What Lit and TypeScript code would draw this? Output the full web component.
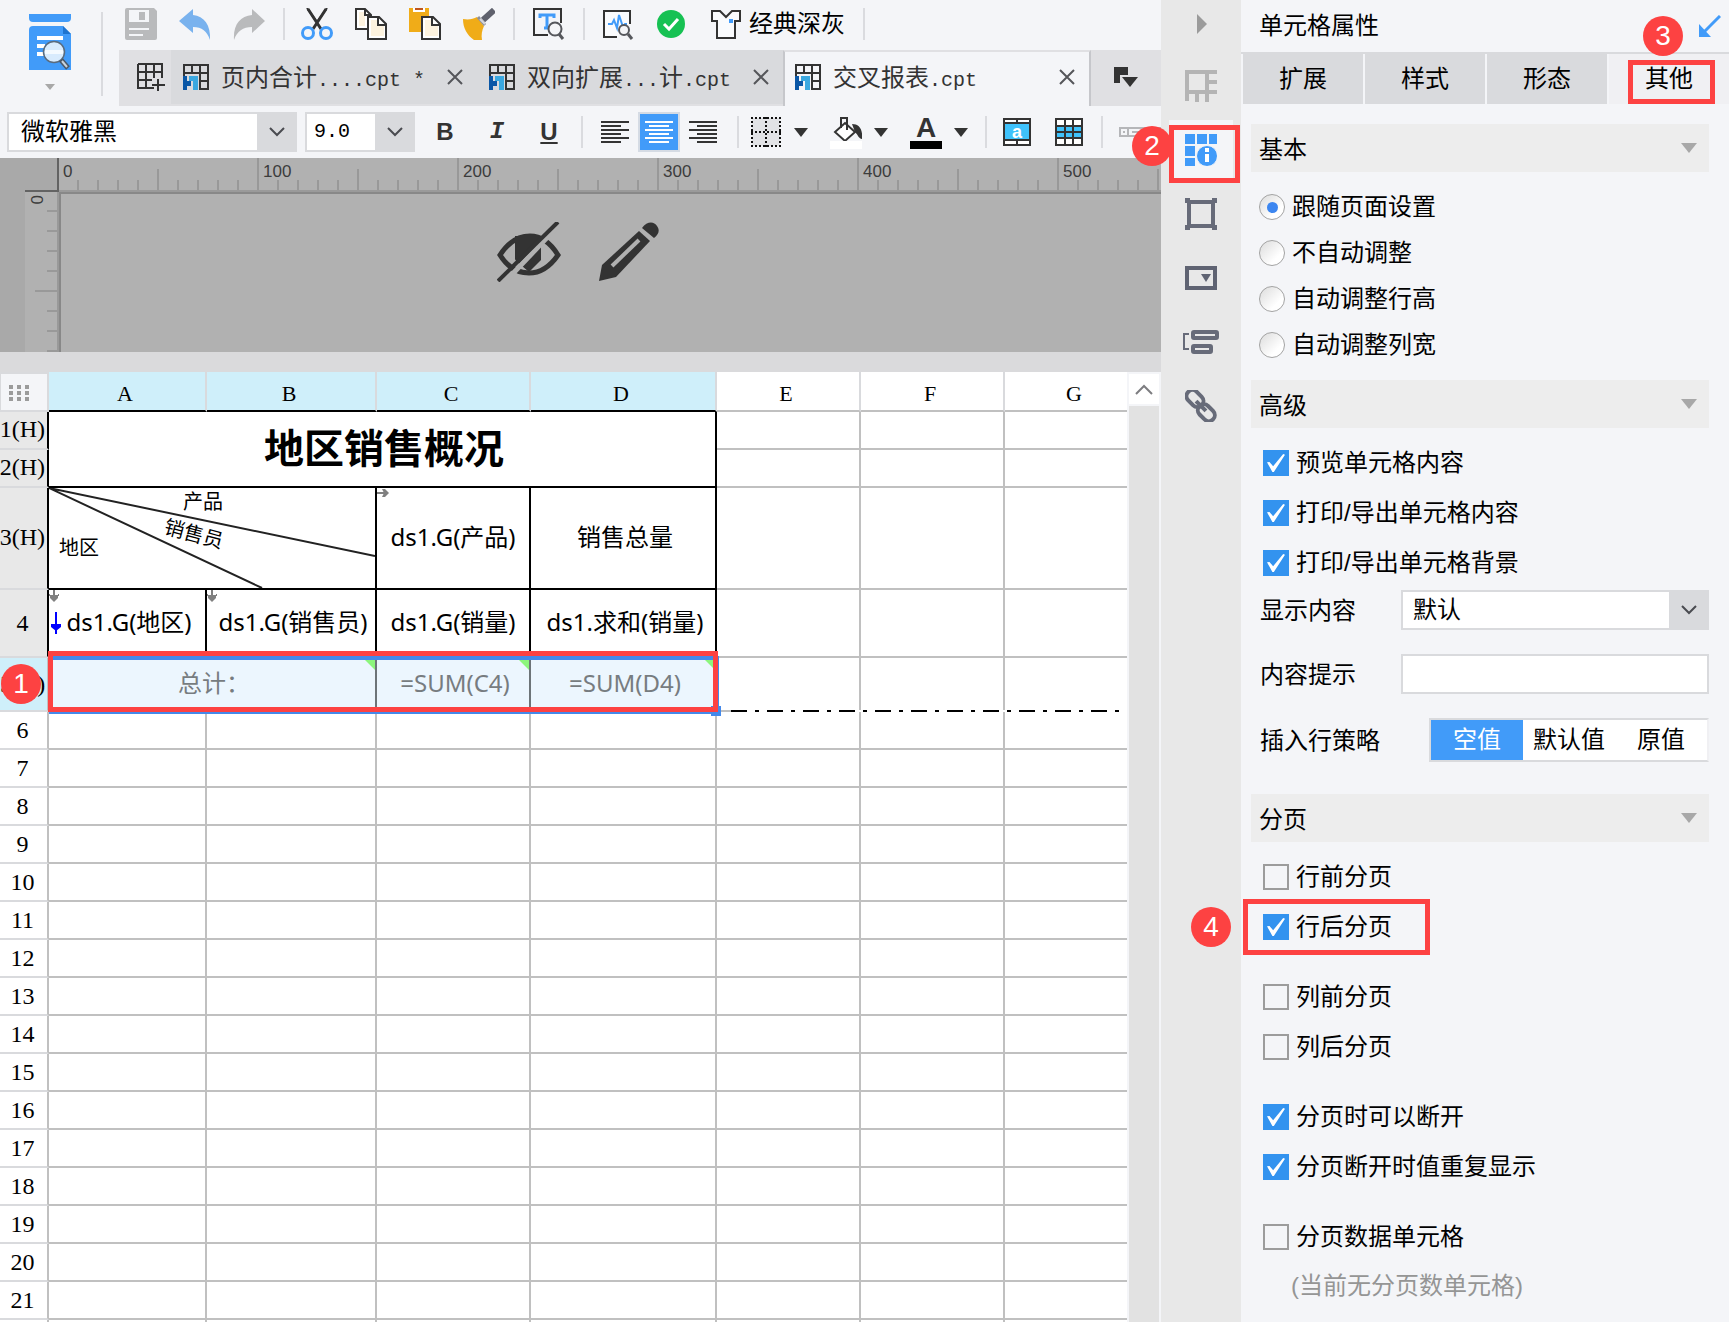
import { LitElement, html, svg, css, nothing } from "lit";
import { customElement } from "lit/decorators.js";
import { classMap } from "lit/directives/class-map.js";

const INK = "#333333";
const BLUE = "#419bf9";

/* ---------- icons ---------- */

const icon = (w: number, h: number, body: unknown) =>
  html`<svg width=${w} height=${h} viewBox="0 0 ${w} ${h}" fill="none" aria-hidden="true">${body}</svg>`;

const icons = {
  logo: icon(42, 58, svg`
    <path d="M0 0h42v4a4 4 0 0 1-4 4H4a4 4 0 0 1-4-4z" fill="${BLUE}"/>
    <path d="M4 12h30l8 8v36H0V16a4 4 0 0 1 4-4z" fill="${BLUE}"/>
    <path d="M34 12v8h8z" fill="#1f74cf"/>
    <path d="M8 24h26M8 32h8M8 40h8" stroke="#fff" stroke-width="4"/>
    <circle cx="25" cy="38" r="10.500" fill="#d8ebfd" stroke="#5a6b7d" stroke-width="1.500"/>
    <path d="M16 38h18" stroke="#f4faff" stroke-width="4"/>
    <path d="M32 46l7 8" stroke="#4b5968" stroke-width="5"/>
    <path d="M33 47l5 6" stroke="#c9d3dd" stroke-width="2"/>`),
  save: icon(32, 32, svg`
    <path d="M2 0h27l3 3v27a2 2 0 0 1-2 2H2a2 2 0 0 1-2-2V2a2 2 0 0 1 2-2z" fill="#b9babc"/>
    <path d="M4 2h20v12H4z" fill="#f4f5f8"/><path d="M14 4h6v8h-6z" fill="#b9babc"/>
    <path d="M4 21h20M4 27h14" stroke="#f4f5f8" stroke-width="2"/>`),
  undo: icon(32, 32, svg`<path d="M0 13L14 1v6c11 1 18 10 17 25C28 23 23 19 14 19v6z" fill="#79b2ee"/>`),
  redo: icon(32, 32, svg`<path d="M32 13L19 1v6C7 8 0 17 1 32 4 23 10 19 19 19v6z" fill="#b9babc"/>`),
  cut: icon(32, 32, svg`
    <path d="M7 1l13 20M25 1L12 21" stroke="${INK}" stroke-width="3"/>
    <path d="M6 0l10 14M26 0L16 14" stroke="${INK}" stroke-width="2"/>
    <circle cx="7" cy="25" r="5.500" stroke="${BLUE}" stroke-width="3"/>
    <circle cx="25" cy="25" r="5.500" stroke="${BLUE}" stroke-width="3"/>`),
  copy: icon(32, 32, svg`
    <path d="M1 1h9l6 6v14H1z" fill="#fff" stroke="${INK}" stroke-width="2"/>
    <path d="M4 4h6v14H4z" fill="#fdf3df"/>
    <path d="M10 1v6h6" stroke="${INK}" stroke-width="2"/>
    <path d="M13 9h11l7 7v15H13z" fill="#fff" stroke="${INK}" stroke-width="2"/>
    <path d="M16 12h8v5h5v11H16z" fill="#fdf3df"/>
    <path d="M23 9v8h8" stroke="${INK}" stroke-width="2"/>`),
  paste: icon(32, 32, svg`
    <path d="M0 0h20v24H0z" fill="#f0ac18"/><path d="M4 0h12v4H4z" fill="#fff"/><path d="M6 0h8v2H6z" fill="#c0561d"/>
    <path d="M13 9h11l7 7v15H13z" fill="#fff" stroke="${INK}" stroke-width="2"/>
    <path d="M16 12h8v5h5v11H16z" fill="#fdf3df"/><path d="M23 9v8h8" stroke="${INK}" stroke-width="2"/>`),
  brush: icon(32, 32, svg`
    <path d="M0 11c6 1 10 0 14-2l7 9c-2 4-3 9-2 14h-8C4 27 0 20 0 11z" fill="#f0ac18"/>
    <path d="M15 9l7 8" stroke="#8d8f99" stroke-width="3"/>
    <path d="M20 12L31 2" stroke="#5f616d" stroke-width="6"/>
    <path d="M17 11l5 5" stroke="#d5d6da" stroke-width="2"/>`),
  textSearch: icon(34, 32, svg`<g transform="translate(1 0)">
    <path d="M16 27H2V1h27v14" stroke="${INK}" stroke-width="2"/>
    <path d="M8 10V7h14v3M15 7v13M12 20h6" stroke="${BLUE}" stroke-width="3"/>
    <circle cx="23" cy="21" r="6.500" fill="#f4f5f8" stroke="#55575c" stroke-width="2"/>
    <path d="M27 26l4 5" stroke="#55575c" stroke-width="3"/></g>`),
  pulse: icon(34, 32, svg`<g transform="translate(2 0)">
    <path d="M14 29H1V3h26v13" fill="#fafbfd" stroke="${INK}" stroke-width="2"/>
    <path d="M5 16h4l2-4 3 8 2-13 4 12 2-3h2" stroke="${BLUE}" stroke-width="2"/>
    <circle cx="21" cy="22" r="5" fill="#f4f5f8" stroke="#55575c" stroke-width="2"/>
    <path d="M25 26l4 5" stroke="#55575c" stroke-width="3"/></g>`),
  ok: icon(32, 32, svg`<circle cx="14" cy="16" r="14" fill="#16c153"/><path d="M7 16l5 5 9-10" stroke="#fff" stroke-width="3"/>`),
  shirt: icon(32, 32, svg`
    <path d="M1 3h8l6 6 6-6h8v10h-5v17H6V13H1z" fill="#fafbfd" stroke="${INK}" stroke-width="2"/>
    <path d="M18 11h4v4h-4z" fill="${BLUE}"/>`),
  newSheet: icon(28, 28, svg`
    <path d="M1 1h24v14M1 1v24h16M1 9h24M1 17h14M9 1v24M17 1v14M21 16v12M15 22h13" stroke="${INK}" stroke-width="2"/>`),
  sheet: icon(26, 26, svg`
    <path d="M1 12V1h24v24h-9M1 9h24M9 1v9M17 1v24M17 17h8" stroke="${INK}" stroke-width="2"/>
    <path d="M0 12h4v5h4v5H4v4H0z" fill="#0a57a6"/><path d="M6 12h9v14h-5V17H6z" fill="#3aa8e0"/>`),
  close: icon(16, 16, svg`<path d="M1 1l14 14M15 1L1 15" stroke="#55565a" stroke-width="2"/>`),
  tabMenu: icon(24, 20, svg`<path d="M0 0h14v8H6v8H0z" fill="${INK}"/><path d="M8 10h16l-8 10z" fill="${INK}"/>`),
  chevron: icon(16, 10, svg`<path d="M1 1l7 7 7-7" stroke="#4a4b50" stroke-width="2"/>`),
  caret: icon(14, 9, svg`<path d="M0 0h14L7 9z" fill="${INK}"/>`),
  greyCaret: icon(16, 10, svg`<path d="M0 0h16L8 10z" fill="#a8a8a8"/>`),
  alignLeft: icon(28, 24, svg`<path d="M0 2h28M0 6h20M0 10h28M0 14h20M0 18h28M0 22h20" stroke="${INK}" stroke-width="2"/>`),
  alignCenter: icon(28, 24, svg`<path d="M0 2h28M4 6h20M0 10h28M4 14h20M0 18h28M4 22h20" stroke="#fff" stroke-width="2"/>`),
  alignRight: icon(28, 24, svg`<path d="M0 2h28M8 6h20M0 10h28M8 14h20M0 18h28M8 22h20" stroke="${INK}" stroke-width="2"/>`),
  borders: icon(32, 32, svg`
    <path d="M2 2h28v28H2z" fill="#e2e3e6"/>
    <path d="M1 2h30M1 16h30M1 30h30M2 1v30M16 1v30M30 1v30" stroke="#111" stroke-width="2" stroke-dasharray="2 2"/>`),
  fill: icon(32, 34, svg`
    <path d="M15 8l10 9-10 9-10-9z" fill="#fff" stroke="${INK}" stroke-width="2"/>
    <path d="M11 13V3h6v12" stroke="${INK}" stroke-width="2"/>
    <path d="M22 9c7 0 11 5 10 15-3 0-4-4-7-7z" fill="${INK}"/>
    <path d="M0 26h32v8H0z" fill="#fff"/>`),
  merge: icon(28, 28, svg`
    <path d="M1 1h26v26H1zM1 5h26M1 22h26M14 1v4M14 22v5" fill="#fff" stroke="${INK}" stroke-width="2"/>
    <path d="M2 6h24v15H2z" fill="#3fc2fb"/>`),
  cells: icon(28, 28, svg`
    <path d="M1 1h26v26H1z" fill="#fff"/><path d="M1 8h26v12H1z" fill="#3fc2fb"/>
    <path d="M1 1h26v26H1zM1 8h26M1 14h26M1 20h26M10 1v26M18 1v26" stroke="${INK}" stroke-width="2"/>`),
  field: icon(42, 10, svg`<path d="M1 1h40v8H1zM9 1v8M4 5h2M13 5h26" stroke="#b5b6b9" stroke-width="2"/>`),
  hidden: icon(64, 60, svg`
    <path d="M3 33C12 19 22 14 33 14s20 6 28 19c-9 13-18 18-29 18S11 46 3 33z" stroke="${INK}" stroke-width="5"/>
    <path d="M18 14h26v24L32 50 18 38z" fill="${INK}"/>
    <path d="M11 31l6-8c-2 8 0 14 4 19z" fill="#b1b1b1"/>
    <path d="M61 4L6 62" stroke="#b1b1b1" stroke-width="5"/>
    <path d="M61 0L1 59" stroke="${INK}" stroke-width="4"/>`),
  pencil: icon(62, 60, svg`
    <path d="M1 59l3-16L41 9l11 10-34 36z" fill="${INK}"/>
    <path d="M14 44l27-26" stroke="#b1b1b1" stroke-width="4"/>
    <path d="M44 6c5-7 12-7 15-2 3 4 2 8-3 12z" fill="${INK}"/>`),
  collapse: icon(32, 32, svg`<path d="M12 6l10 10-10 10z" fill="#9b9b9b"/>`),
  railTable: icon(32, 32, svg`<path d="M2 31V2h30M2 22h30M22 2v30M22 12h10M12 22v10" stroke="#b4b4b4" stroke-width="4"/>`),
  railInfo: icon(32, 32, svg`
    <path d="M0 0h10v10H0zM12 0h10v10H12zM24 0h8v10h-8zM0 12h10v10H0zM0 24h10v8H0z" fill="${BLUE}"/>
    <circle cx="22" cy="22" r="10.500" fill="${BLUE}" stroke="#f4f5f8"/>
    <path d="M20 14h4v4h-4zM20 20h4v8h-4z" fill="#fff"/>`),
  railFrame: icon(32, 32, svg`<path d="M4 4h24v24H4z" stroke="#676b79" stroke-width="4"/><path d="M0 0h5v5H0zM27 0h5v5h-5zM0 27h5v5H0zM27 27h5v5h-5z" fill="#676b79"/>`),
  railDrop: icon(32, 32, svg`<rect x="2" y="6" width="28" height="20" stroke="#5f6372" stroke-width="4"/><path d="M16 12h10l-5 8z" fill="#5f6372"/>`),
  railWidget: icon(36, 32, svg`
    <path d="M6 8H1v15h5" stroke="#676b79" stroke-width="2"/>
    <rect x="10" y="6" width="24" height="6" rx="1" stroke="#676b79" stroke-width="4"/>
    <rect x="10" y="20" width="18" height="6" rx="1" stroke="#676b79" stroke-width="4"/>`),
  railLink: icon(32, 32, svg`
    <g transform="rotate(45 16 16)" stroke="#676b79" stroke-width="4">
      <rect x="-3" y="9" width="19" height="12" rx="6"/><rect x="15" y="11" width="19" height="12" rx="6"/>
      <path d="M9 16h14"/></g>`),
  popIn: icon(22, 22, svg`<path d="M21 1L4 18" stroke="${BLUE}" stroke-width="3"/><path d="M0 9l12 13H0z" fill="${BLUE}"/>`),
  up: icon(18, 11, svg`<path d="M1 10l8-8 8 8" stroke="#7d7d80" stroke-width="2"/>`),
  dots: icon(20, 16, svg`<path d="M0 2h4m4 0h4m4 0h4M0 8h4m4 0h4m4 0h4M0 14h4m4 0h4m4 0h4" stroke="#9b9b9b" stroke-width="4"/>`),
  expandDown: icon(10, 12, svg`<path d="M5 0v9M0 5h1M9 5h1" stroke="#808080" stroke-width="2"/><path d="M1 5h8v3l-4 4-4-4z" fill="#808080"/>`),
  expandRight: icon(12, 10, svg`<path d="M0 5h9" stroke="#808080" stroke-width="2"/><path d="M5 1h3l4 4-4 4H5l2-4z" fill="#808080"/>`),
  blueDown: icon(10, 22, svg`<path d="M5 0v22" stroke="#0000ff" stroke-width="2"/><path d="M0 12h10v3l-5 4-5-4z" fill="#0000ff"/>`),
};

/* ---------- shared styles ---------- */

const shared = css`
  *, :host { box-sizing: border-box; }
  :host {
    font-family: "Liberation Sans", "Noto Sans CJK SC", sans-serif;
    font-size: 24px;
    line-height: 32px;
    color: #000;
  }
  svg { display: block; flex: none; }
  button, input, select { font: inherit; color: inherit; margin: 0; border-radius: 0; }
  button { border: 0; padding: 0; background: none; display: flex; align-items: center; justify-content: center; white-space: nowrap; }
  .badge {
    position: absolute; width: 40px; height: 40px; border-radius: 50%; z-index: 3;
    background: #fd4242; color: #fff; font-size: 28px; line-height: 40px; text-align: center;
  }
  .frame { position: absolute; border: 5px solid #fd4242; z-index: 2; pointer-events: none; }
  .combo { position: relative; display: flex; border: 2px solid #d9dadd; background: #fff; height: 40px; }
  .combo select { appearance: none; flex: 1; min-width: 0; border: 0; background: none; padding: 0 40px 0 12px; outline: 0; }
  .combo .arrow {
    position: absolute; top: -2px; right: -2px; width: 40px; height: 40px; background: #d9dadd;
    display: flex; align-items: center; justify-content: center; pointer-events: none;
  }
`;

/* ---------- toolbar ---------- */

@customElement("tool-header")
class ToolHeader extends LitElement {
  static styles = [shared, css`
    :host { display: block; background: #f4f5f8; }
    .top { display: flex; }
    .logo { width: 119px; flex: none; padding: 14px 0 0 29px; position: relative; }
    .logo button { flex-direction: column; gap: 12px; width: 42px; }
    .logo::after { content: ""; position: absolute; top: 12px; bottom: 10px; right: 16px; width: 2px; background: #dadbdf; }
    .main { flex: 1; min-width: 0; }
    .actions { height: 50px; padding: 0 0 2px 6px; display: flex; align-items: center; gap: 22px; }
    .sep { width: 2px; height: 32px; background: #dadbdf; flex: none; }
    .actions .sep { margin: 0 -6px 0 -4px; }
    .theme { gap: 6px; }
    .tabs { display: flex; height: 56px; background: #d9dadd; border-bottom: 2px solid #e0e0e3; color: #333; }
    .new { width: 52px; background: #e0e0e3; flex: none; padding-left: 12px; }
    .tab { width: 306px; display: flex; align-items: center; padding: 0 14px 0 12px; }
    .tab.on { width: 308px; background: #f4f5f8; border: 2px solid #c6c7cb; border-width: 2px 2px 0; border-top-color: #e0e0e3; height: 56px; padding-left: 10px; padding-bottom: 4px; }
    .name { flex: 1; margin-left: 12px; padding-top: 4px; display: flex; align-items: baseline; white-space: pre; }
    .mono { font-family: "Liberation Mono", monospace; font-size: 20px; }
    .menu { flex: 1; background: #e0e0e3; }
    .format { height: 52px; display: flex; align-items: center; padding-left: 7px; overflow: hidden; }
    .family { width: 290px; margin-right: 8px; flex: none; }
    .size { width: 110px; margin-right: 8px; flex: none; }
    .size select { padding-left: 7px; font-family: "Liberation Mono", monospace; font-size: 20px; }
    .pick { gap: 8px; display: flex; margin-right: 10px; }
    .pick button { width: 44px; height: 40px; color: #333; }
    .bold { font-weight: bold; }
    .italic { font-family: "Liberation Mono", monospace; font-style: italic; font-weight: bold; }
    .underline { text-decoration: underline; font-weight: bold; }
    .align { gap: 2px; display: flex; margin: 0 13px 0 11px; }
    .align button { width: 42px; height: 40px; }
    .align .on { background: #419bf9; border: 2px solid #d5dbe4; }
    .split { display: flex; gap: 22px; margin: 0 17px 0 11px; }
    .split button { gap: 12px; width: 58px; height: 40px; }
    .ink { width: 32px; display: flex; flex-direction: column; align-items: center; font-weight: bold; font-size: 28px; line-height: 26px; color: #333; }
    .ink::after { content: ""; width: 32px; height: 8px; background: #000; }
    .cells { display: flex; gap: 24px; margin: 0 18px 0 16px; }
    .merge { position: relative; }
    .merge span { position: absolute; color: #fff; font-size: 18px; line-height: 18px; font-weight: bold; }
    .field { margin-left: 16px; }
  `];

  private tab(parts: [string, boolean][], on = false) {
    return html`<div class=${classMap({ tab: true, on })} role="tab" aria-selected=${on}>
      ${icons.sheet}
      <span class="name">${parts.map(([t, mono]) => html`<span class=${mono ? "mono" : ""}>${t}</span>`)}</span>
      <button aria-label="关闭">${icons.close}</button>
    </div>`;
  }

  render() {
    const sep = html`<span class="sep"></span>`;
    return html`
      <div class="top">
        <div class="logo"><button aria-label="模板">${icons.logo}${icon(10, 6, svg`<path d="M0 0h10L5 6z" fill="#a8a8a8"/>`)}</button></div>
        <div class="main">
          <div class="actions">
            <button aria-label="保存">${icons.save}</button>
            <button aria-label="撤销">${icons.undo}</button>
            <button aria-label="重做">${icons.redo}</button>
            ${sep}
            <button aria-label="剪切">${icons.cut}</button>
            <button aria-label="复制">${icons.copy}</button>
            <button aria-label="粘贴">${icons.paste}</button>
            <button aria-label="格式刷">${icons.brush}</button>
            ${sep}
            <button aria-label="查找">${icons.textSearch}</button>
            ${sep}
            <button aria-label="性能">${icons.pulse}</button>
            <button aria-label="校验">${icons.ok}</button>
            <button class="theme">${icons.shirt}经典深灰</button>
            ${sep}
          </div>
          <div class="tabs" role="tablist">
            <button class="new" aria-label="新建">${icons.newSheet}</button>
            ${this.tab([["页内合计", false], ["....cpt *", true]])}
            ${this.tab([["双向扩展", false], ["...", true], ["计", false], [".cpt", true]])}
            ${this.tab([["交叉报表", false], [".cpt", true]], true)}
            <button class="menu" aria-label="更多">${icons.tabMenu}</button>
          </div>
        </div>
      </div>
      <div class="format">
        <div class="combo family">
          <select aria-label="字体"><option>微软雅黑</option></select><span class="arrow">${icons.chevron}</span>
        </div>
        <div class="combo size">
          <select aria-label="字号"><option>9.0</option></select><span class="arrow">${icons.chevron}</span>
        </div>
        <div class="pick">
          <button class="bold">B</button><button class="italic">I</button><button class="underline">U</button>
        </div>
        ${sep}
        <div class="align">
          <button aria-label="左对齐">${icons.alignLeft}</button>
          <button class="on" aria-label="居中">${icons.alignCenter}</button>
          <button aria-label="右对齐">${icons.alignRight}</button>
        </div>
        ${sep}
        <div class="split">
          <button aria-label="边框">${icons.borders}${icons.caret}</button>
          <button aria-label="背景色">${icons.fill}${icons.caret}</button>
          <button aria-label="字体颜色"><span class="ink">A</span>${icons.caret}</button>
        </div>
        ${sep}
        <div class="cells">
          <button class="merge" aria-label="合并">${icons.merge}<span>a</span></button>
          <button aria-label="单元格">${icons.cells}</button>
        </div>
        ${sep}
        <button class="field" aria-label="控件">${icons.field}</button>
      </div>`;
  }
}

/* ---------- parameter pane with rulers ---------- */

@customElement("param-pane")
class ParamPane extends LitElement {
  static styles = [shared, css`
    :host { display: grid; grid-template: 34px 160px / 25px 34px minmax(0, 1fr); background: #b1b1b1; color: #3c3c3c; font-size: 17px; line-height: 20px; }
    .edge { grid-row: 1 / 3; background: #a9a9a9; }
    .corner { background: #a9a9a9; border: 2px solid #636363; border-width: 0 2px 2px 0; }
    .across {
      display: flex; overflow: hidden; border-bottom: 2px solid #9a9a9a; padding-top: 2px;
      background:
        repeating-linear-gradient(90deg, #999 0 2px, transparent 2px 200px) -2px 0 / 2000px 100%,
        repeating-linear-gradient(90deg, #999 0 2px, transparent 2px 100px) -2px 11px / 2000px 100% no-repeat,
        repeating-linear-gradient(90deg, #999 0 2px, transparent 2px 20px) -2px 22px / 2000px 100% no-repeat;
    }
    .across span { width: 200px; flex: none; padding: 2px 0 0 4px; }
    .down {
      border-right: 2px solid #999;
      background:
        repeating-linear-gradient(#999 0 2px, transparent 2px 100px) 10px -2px / 100% 2000px no-repeat,
        repeating-linear-gradient(#999 0 2px, transparent 2px 20px) 22px -2px / 100% 2000px no-repeat #b1b1b1;
    }
    .down span { display: flex; justify-content: flex-end; background: #b1b1b1; writing-mode: vertical-rl; line-height: 22px; height: 12px; width: 22px; }
    .canvas { border: 2px solid #888; border-width: 2px 0 0 2px; display: flex; justify-content: center; gap: 37px; padding-top: 28px; align-items: flex-start; }
    .canvas button:last-child { margin-right: 66px; }
  `];
  render() {
    return html`
      <div class="edge"></div><div class="corner"></div>
      <div class="across">${[0, 100, 200, 300, 400, 500].map((n) => html`<span>${n}</span>`)}</div>
      <div class="down"><span>0</span></div>
      <div class="canvas">
        <button aria-label="隐藏">${icons.hidden}</button><button aria-label="编辑">${icons.pencil}</button>
      </div>`;
  }
}

/* ---------- spreadsheet ---------- */

const COLS = ["A", "B", "C", "D", "E", "F", "G"];
const PLAIN_ROWS = Array.from({ length: 16 }, (_, i) => i + 6);

@customElement("report-sheet")
class ReportSheet extends LitElement {
  static styles = [shared, css`
    :host { display: flex; padding-top: 20px; background: #dadadc; min-height: 0; overflow: hidden; }
    .area { flex: 1; min-width: 0; position: relative; background: #fff; overflow: hidden; }
    table { width: 100%; border-collapse: separate; border-spacing: 0; table-layout: fixed; }
    .w0 { width: 49px; } .wA { width: 158px; } .wB { width: 170px; } .wC { width: 154px; } .wD { width: 186px; } .wE { width: 144px; }
    th, td { padding: 0; border: 2px solid #c0c0c0; border-width: 0 2px 2px 0; text-align: center; vertical-align: middle; font-weight: normal; white-space: nowrap; overflow: hidden; }
    th { font-family: "Liberation Serif", serif; }
    th.last, td.last { border-right: 0; }
    thead th { height: 40px; font-size: 22px; line-height: 24px; border-right-color: #d9dadd; padding: 6px 4px 0 0; }
    thead .last { padding: 6px 0 0 16px; }
    thead .sel { background: #cfeffa; border-bottom-color: #000; }
    thead .origin { background: #f4f5f8; border: 2px solid #d9dadd; border-width: 2px 2px 2px 1px; padding: 2px 0 0 8px; }
    tbody th { line-height: 24px; border-bottom-color: #d9dadd; padding-right: 2px; }
    tbody .fixed { background: #e8e8e8; border-right-color: #000; padding: 0 3px 2px 0; direction: rtl; }
    tbody .four { background: #e8e8e8; border-right-color: #000; }
    tbody .cur { background: #cfeffa; padding-right: 4px; }
    td.k { border-color: #000; }
    .r1 { height: 38px; } .r3 { height: 102px; } .r4 { height: 68px; } .r5 { height: 54px; }
    td { font-family: "Noto Sans", "Noto Sans CJK SC", sans-serif; position: relative; }
    .k, .sum { padding-bottom: 2px; }
    .title { font-size: 40px; line-height: 48px; font-weight: bold; padding-left: 4px; }
    .diag svg { width: 100%; height: 100px; font-size: 20px; }
    .diag { vertical-align: top; padding: 0; }
    .mark { position: absolute; top: 0; left: 0; }
    .lead { position: absolute; left: 2px; top: 22px; }
    td.sum { background: #ecf6fe; color: #777c80; border-right-color: #6d7478; }
    .sum::after { content: ""; position: absolute; top: 2px; right: 0; border: 5px solid #8cf67c; border-left-color: transparent; border-bottom-color: transparent; }
    .pad { padding-left: 4px; }
    .selection { position: absolute; left: 49px; top: 284px; width: 670px; height: 58px; border: 3px solid #4489ea; border-width: 4px 2px 3px 0; }
    .handle { position: absolute; left: 711px; top: 334px; width: 10px; height: 10px; background: #4489ea; }
    .pagebreak { position: absolute; left: 731px; right: 0; top: 338px; height: 2px;
      background: repeating-linear-gradient(90deg, #000 0 16px, #fff 16px 24px, #000 24px 28px, #fff 28px 36px); }
    .frame { left: 48px; top: 279px; width: 670px; height: 61px; }
    .badge { left: 1px; top: 292px; }
    .scroll { width: 34px; flex: none; background: #e2e2e2; border: 2px solid #f4f5f8; border-width: 0 2px; }
    .scroll button { width: 30px; height: 34px; background: #fff; border: 2px solid #f4f5f8; border-width: 2px 0; }
  `];

  private blanks() {
    return html`<td></td><td></td><td class="last"></td>`;
  }

  render() {
    return html`
      <div class="area">
        <table>
          <colgroup><col class="w0"><col class="wA"><col class="wB"><col class="wC"><col class="wD"><col class="wE"><col class="wE"><col></colgroup>
          <thead><tr>
            <th class="origin">${icons.dots}</th>
            ${COLS.map((c, i) => html`<th class=${classMap({ sel: i < 4, last: i === 6 })}>${c}</th>`)}
          </tr></thead>
          <tbody>
            <tr class="r1"><th class="fixed"><bdi>1(H)</bdi></th><td class="k title" colspan="4" rowspan="2">地区销售概况</td>${this.blanks()}</tr>
            <tr class="r1"><th class="fixed"><bdi>2(H)</bdi></th>${this.blanks()}</tr>
            <tr class="r3">
              <th class="fixed"><bdi>3(H)</bdi></th>
              <td class="k diag" colspan="2">
                <svg viewBox="0 0 326 100">
                  <path d="M0 0L326 68M0 0L213 100" stroke="#222" stroke-width="2"/>
                  <g fill="#000">
                    <text x="134" y="21">产品</text>
                    <text x="10" y="67">地区</text>
                    <text x="114" y="45" transform="rotate(15 114 45)">销售员</text>
                  </g>
                </svg>
              </td>
              <td class="k"><span class="mark">${icons.expandRight}</span>ds1.G(产品)</td>
              <td class="k pad">销售总量</td>${this.blanks()}
            </tr>
            <tr class="r4">
              <th class="four">4</th>
              <td class="k pad"><span class="mark">${icons.expandDown}</span><span class="lead">${icons.blueDown}</span>ds1.G(地区)</td>
              <td class="k pad"><span class="mark">${icons.expandDown}</span>ds1.G(销售员)</td>
              <td class="k">ds1.G(销量)</td><td class="k pad">ds1.求和(销量)</td>${this.blanks()}
            </tr>
            <tr class="r5">
              <th class="cur">5(H)</th>
              <td class="sum pad" colspan="2">总计：</td><td class="sum pad">=SUM(C4)</td><td class="sum pad">=SUM(D4)</td>${this.blanks()}
            </tr>
            ${PLAIN_ROWS.map((n) => html`<tr class="r1"><th>${n}</th><td></td><td></td><td></td><td></td>${this.blanks()}</tr>`)}
            <tr class="r1"><th></th><td></td><td></td><td></td><td></td>${this.blanks()}</tr>
          </tbody>
        </table>
        <div class="selection"></div><div class="pagebreak"></div>
        <div class="frame"></div><div class="handle"></div><div class="badge">1</div>
      </div>
      <div class="scroll"><button aria-label="向上">${icons.up}</button></div>`;
  }
}

/* ---------- side rail ---------- */

@customElement("side-rail")
class SideRail extends LitElement {
  static styles = [shared, css`
    :host { display: flex; flex-direction: column; background: #e8e8e8; padding: 4px 8px; gap: 4px; }
    button { height: 60px; position: relative; width: 64px; }
    .first { height: 40px; margin-bottom: 8px; }
    .on { background: #f4f5f8; }
    .frame { left: 0; top: 5px; width: 71px; height: 58px; }
    .badge { left: -37px; top: 6px; }
  `];
  render() {
    return html`
      <button class="first" aria-label="收起">${icons.collapse}</button>
      <button aria-label="单元格元素">${icons.railTable}</button>
      <button class="on" aria-label="单元格属性">${icons.railInfo}<span class="frame"></span><span class="badge">2</span></button>
      <button aria-label="悬浮元素">${icons.railFrame}</button>
      <button aria-label="控件设置">${icons.railDrop}</button>
      <button aria-label="条件属性">${icons.railWidget}</button>
      <button aria-label="超级链接">${icons.railLink}</button>`;
  }
}

/* ---------- property panel ---------- */

@customElement("property-panel")
class PropertyPanel extends LitElement {
  static styles = [shared, css`
    :host { display: block; background: #f4f5f8; }
    .head { height: 54px; display: flex; align-items: center; justify-content: space-between; padding: 0 8px 0 18px; border-bottom: 2px solid #d9dadd; }
    .tabs { display: flex; gap: 2px; padding-left: 2px; height: 50px; }
    .tabs button { flex: 1; background: #d9dadd; position: relative; }
    .tabs .on { background: #f0f0f3; }
    .tabs .frame { left: 19px; top: 6px; width: 87px; height: 44px; }
    .tabs .badge { left: 34px; top: -38px; }
    .body { padding: 20px 20px 0 10px; }
    .section { width: 100%; height: 48px; background: #ededed; justify-content: space-between; padding: 0 12px 0 8px; }
    .section span { padding-top: 4px; }
    .radios { display: flex; flex-direction: column; gap: 14px; padding: 19px 0 19px 8px; }
    .checks { display: flex; flex-direction: column; gap: 18px; padding: 19px 0 11px 12px; }
    .group { display: flex; flex-direction: column; gap: 18px; }
    .group + .group { margin-top: 38px; }
    .pages { gap: 0; padding-bottom: 0; }
    label { display: flex; align-items: center; gap: 7px; width: max-content; position: relative; }
    input[type="radio"], input[type="checkbox"] { appearance: none; width: 26px; height: 26px; flex: none; display: grid; place-items: center; }
    input[type="radio"] { border: 1px solid #a3a3a3; border-radius: 50%; background: linear-gradient(135deg, #dcdcdc, #fff 70%); }
    input[type="radio"]:checked::before { content: ""; width: 11px; height: 11px; border-radius: 50%; background: #3c86f0; }
    input[type="checkbox"] { border: 2px solid #9c9c9c; }
    input[type="checkbox"]:checked { border: 0; background: #3393ef; }
    input[type="checkbox"]:checked::before { content: ""; width: 18px; height: 18px; background: #fff; clip-path: polygon(0 46%, 14% 44%, 34% 68%, 90% 0, 100% 4%, 38% 100%, 30% 100%); }
    .field { display: flex; align-items: center; height: 40px; }
    .field + .field { margin-top: 24px; }
    .field label, .policy span { width: 150px; flex: none; padding: 2px 0 0 9px; }
    .field .combo { flex: 1; }
    .field select { padding-left: 10px; }
    .text { flex: 1; min-width: 0; height: 40px; border: 2px solid #d9dadd; background: #fff; padding: 0 10px; outline: 0; }
    .policy { justify-content: space-between; height: 44px; margin-bottom: 32px; }
    .segments { width: 280px; display: flex; border: 2px solid #d9dadd; border-right-color: #f0f0f3; background: #fff; }
    .segments button { flex: 1; height: 40px; }
    .segments .on { background: #419bf9; color: #fff; }
    .marked .frame { left: -20px; top: -12px; width: 187px; height: 56px; }
    .marked .badge { left: -72px; top: -4px; }
    .note { color: #959595; padding: 17px 0 0 40px; margin: 0; }
  `];

  private check(text: string, checked: boolean, mark = false) {
    return html`<label class=${mark ? "marked" : ""}><input type="checkbox" ?checked=${checked}>${text}
      ${mark ? html`<span class="frame"></span><span class="badge">4</span>` : nothing}</label>`;
  }

  private section(text: string) {
    return html`<button class="section"><span>${text}</span>${icons.greyCaret}</button>`;
  }

  render() {
    return html`
      <div class="head"><span>单元格属性</span><button aria-label="停靠">${icons.popIn}</button></div>
      <div class="tabs">
        <button>扩展</button><button>样式</button><button>形态</button>
        <button class="on">其他<span class="frame"></span><span class="badge">3</span></button>
      </div>
      <div class="body">
        ${this.section("基本")}
        <div class="radios">
          ${["跟随页面设置", "不自动调整", "自动调整行高", "自动调整列宽"].map(
            (t, i) => html`<label><input type="radio" name="fit" ?checked=${i === 0}>${t}</label>`)}
        </div>
        ${this.section("高级")}
        <div class="checks">
          ${this.check("预览单元格内容", true)}
          ${this.check("打印/导出单元格内容", true)}
          ${this.check("打印/导出单元格背景", true)}
        </div>
        <div class="field">
          <label for="show">显示内容</label>
          <div class="combo"><select id="show"><option>默认</option></select><span class="arrow">${icons.chevron}</span></div>
        </div>
        <div class="field"><label for="tip">内容提示</label><input class="text" id="tip" type="text"></div>
        <div class="field policy">
          <span>插入行策略</span>
          <div class="segments"><button class="on">空值</button><button>默认值</button><button>原值</button></div>
        </div>
        ${this.section("分页")}
        <div class="checks pages">
          <div class="group">${this.check("行前分页", false)}${this.check("行后分页", true, true)}</div>
          <div class="group">${this.check("列前分页", false)}${this.check("列后分页", false)}</div>
          <div class="group">${this.check("分页时可以断开", true)}${this.check("分页断开时值重复显示", true)}</div>
          <div class="group">${this.check("分页数据单元格", false)}</div>
        </div>
        <p class="note">(当前无分页数单元格)</p>
      </div>`;
  }
}

/* ---------- page ---------- */

@customElement("app-root")
class AppRoot extends LitElement {
  static styles = css`
    :host { display: grid; grid-template-columns: minmax(0, 1fr) 80px 488px; height: 100vh; overflow: hidden; background: #f4f5f8; }
    .work { display: flex; flex-direction: column; min-width: 0; min-height: 0; }
    .work report-sheet { flex: 1; }
    side-rail { position: relative; z-index: 1; }
    property-panel { position: relative; z-index: 1; }
  `;
  render() {
    return html`
      <div class="work"><tool-header></tool-header><param-pane></param-pane><report-sheet></report-sheet></div>
      <side-rail></side-rail>
      <property-panel></property-panel>`;
  }
}
